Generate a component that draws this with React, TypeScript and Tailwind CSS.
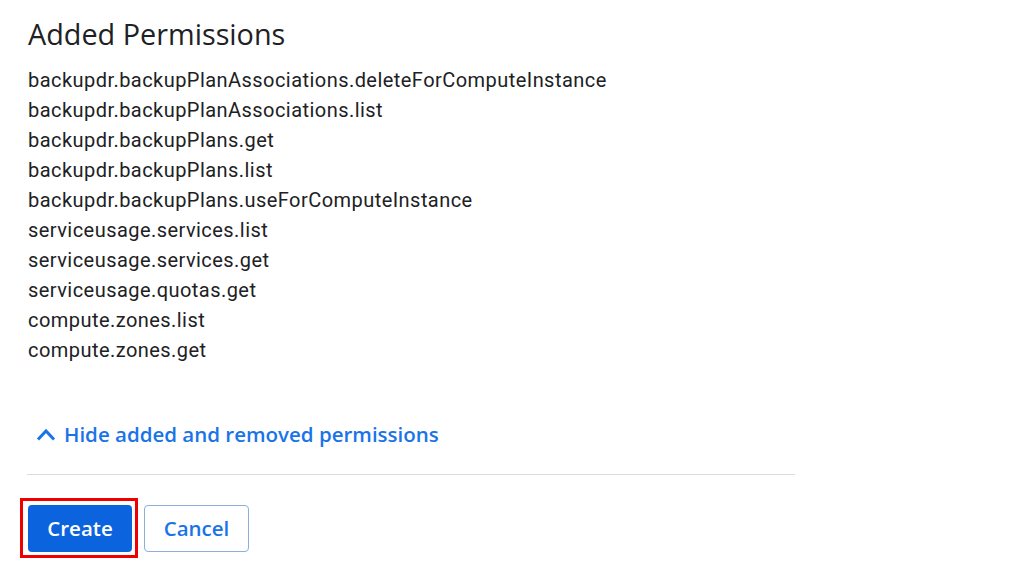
import React from "react";

const perms = [
  "backupdr.backupPlanAssociations.deleteForComputeInstance",
  "backupdr.backupPlanAssociations.list",
  "backupdr.backupPlans.get",
  "backupdr.backupPlans.list",
  "backupdr.backupPlans.useForComputeInstance",
  "serviceusage.services.list",
  "serviceusage.services.get",
  "serviceusage.quotas.get",
  "compute.zones.list",
  "compute.zones.get",
];

export default function App() {
  return (
    <div className="w-[1022px] h-[576px] bg-white overflow-hidden font-['Roboto',sans-serif]">
      <div className="pl-[28px] pt-[16px] w-[795px]">
        <h1 className="text-[28.8px] leading-[36px] text-[#202124] font-normal font-['Open_Sans',sans-serif]">
          Added Permissions
        </h1>
        <ul className="mt-[13px]">
          {perms.map((p) => (
            <li key={p} className="text-[20px] leading-[30px] tracking-[0.45px] text-[#202124]">
              {p}
            </li>
          ))}
        </ul>
        <button className="mt-[57px] flex items-center gap-[8px] h-[24px] text-[#1a73e8] text-[20.5px] font-semibold ml-[8px] font-['Open_Sans',sans-serif]">
          <svg width="20" height="13" viewBox="0 0 20 13" fill="none">
            <path d="M2 11.5 L10 3 L18 11.5" stroke="#1a73e8" strokeWidth="3" />
          </svg>
          Hide added and removed permissions
        </button>
        <div className="mt-[28px] h-px bg-[#dadce0] -ml-px" />
        <div className="mt-[30px] flex gap-[12px] font-['Open_Sans',sans-serif]">
          <div className="relative">
            <button className="w-[104px] h-[47px] rounded-[4px] bg-[#0b63de] text-white text-[20.5px] font-semibold">
              Create
            </button>
            <span className="absolute -left-[8px] -top-[7px] -right-[6px] -bottom-[6px] border-[3px] border-[#ee0000] pointer-events-none" />
          </div>
          <button className="w-[105px] h-[47px] rounded-[4px] border border-[#8eaee0] text-[#1a73e8] text-[20.5px] font-semibold">
            Cancel
          </button>
        </div>
      </div>
    </div>
  );
}
